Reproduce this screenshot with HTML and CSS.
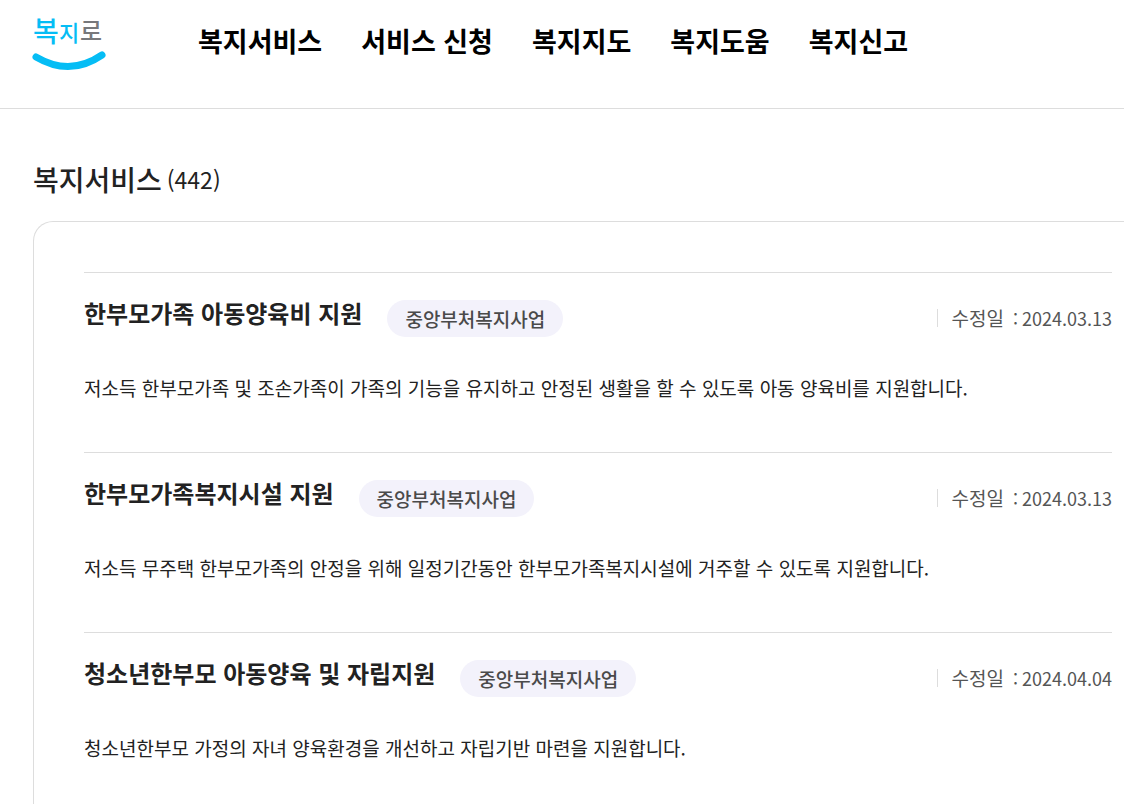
FILE: index.html
```html
<!DOCTYPE html>
<html lang="ko">
<head>
  <meta charset="utf-8">
  <title>복지로</title>
  <link rel="stylesheet" href="styles.css">
</head>
<body>
  <header class="header">
    <a class="logo" href="#" aria-label="복지로">
      <svg width="74" height="64" viewBox="0 0 74 64">
        <text class="logo_text"><tspan x="1" y="34" font-size="28">복</tspan><tspan x="27" y="33" font-size="22">지</tspan><tspan class="logo_gray" x="48" y="32" font-size="24">로</tspan></text>
        <path d="M4 49 Q38 69 70 47" fill="none" stroke="#05bdf5" stroke-width="7" stroke-linecap="round"/>
      </svg>
    </a>
    <nav class="menu">
      <a href="#">복지서비스</a>
      <a href="#">서비스 신청</a>
      <a href="#">복지지도</a>
      <a href="#">복지도움</a>
      <a href="#">복지신고</a>
    </nav>
  </header>
  <main class="content">
    <h1 class="title">복지서비스 <span class="count">(442)</span></h1>
    <div class="panel">
      <article class="item">
        <div class="item_head">
          <h2 class="item_name"><a href="#">한부모가족 아동양육비 지원</a></h2>
          <span class="badge">중앙부처복지사업</span>
          <p class="date"><span class="date_label">수정일</span><span>:</span><time>2024.03.13</time></p>
        </div>
        <p class="desc">저소득 한부모가족 및 조손가족이 가족의 기능을 유지하고 안정된 생활을 할 수 있도록 아동 양육비를 지원합니다.</p>
      </article>
      <article class="item">
        <div class="item_head">
          <h2 class="item_name"><a href="#">한부모가족복지시설 지원</a></h2>
          <span class="badge">중앙부처복지사업</span>
          <p class="date"><span class="date_label">수정일</span><span>:</span><time>2024.03.13</time></p>
        </div>
        <p class="desc">저소득 무주택 한부모가족의 안정을 위해 일정기간동안 한부모가족복지시설에 거주할 수 있도록 지원합니다.</p>
      </article>
      <article class="item">
        <div class="item_head">
          <h2 class="item_name"><a href="#">청소년한부모 아동양육 및 자립지원</a></h2>
          <span class="badge">중앙부처복지사업</span>
          <p class="date"><span class="date_label">수정일</span><span>:</span><time>2024.04.04</time></p>
        </div>
        <p class="desc">청소년한부모 가정의 자녀 양육환경을 개선하고 자립기반 마련을 지원합니다.</p>
      </article>
    </div>
  </main>
</body>
</html>
```

FILE: styles.css
```css
* {
  box-sizing: border-box;
}
body {
  margin: 0;
  min-height: 100vh;
  display: flex;
  flex-direction: column;
  background-color: #fff;
  color: #222;
  font-family: "Noto Sans CJK KR", sans-serif;
}
h1, h2, p {
  margin: 0;
}
a {
  color: inherit;
  text-decoration: none;
}

.header {
  display: flex;
  align-items: flex-start;
  gap: 92px;
  padding: 8px 32px 36px;
  border-bottom: 1px solid #ddd;
}
.logo svg {
  display: block;
}
.logo_text {
  fill: #05bdf5;
  font-weight: 500;
}
.logo_gray {
  fill: #77787b;
}
.menu {
  display: flex;
  gap: 39px;
  padding-top: 13px;
  color: #000;
  font-size: 27px;
  font-weight: 700;
  line-height: 40px;
}

.content {
  flex: 1;
  display: flex;
  flex-direction: column;
  padding: 50px 0 0 33px;
}
.title {
  display: flex;
  gap: 5px;
  font-size: 28px;
  font-weight: 500;
  line-height: 40px;
}
.count {
  font-size: 23px;
  font-weight: 400;
}
.panel {
  flex: 1;
  margin-top: 22px;
  padding: 50px 12px 0 50px;
  border: 1px solid #ddd;
  border-width: 1px 0 0 1px;
  border-top-left-radius: 20px;
}

.item {
  padding: 27px 0 50px;
  border-top: 1px solid #ddd;
}
.item:last-child {
  padding-bottom: 30px;
}
.item_head {
  display: flex;
  align-items: flex-start;
}
.item_name {
  font-size: 24px;
  font-weight: 700;
  line-height: 26px;
}
.badge {
  margin-left: 25px;
  padding: 0 18px;
  border-radius: 20px;
  background-color: #f3f2fb;
  color: #4a4a4a;
  font-size: 19px;
  font-weight: 500;
  line-height: 37px;
}
.date {
  display: flex;
  align-items: center;
  gap: 4px;
  margin-left: auto;
  color: #555;
  font-size: 18px;
  line-height: 36px;
}
.date::before {
  content: "";
  width: 1px;
  height: 18px;
  margin-right: 10px;
  background-color: #ddd;
}
.date_label {
  margin-right: 5px;
  font-size: 19px;
}
.desc {
  margin-top: 37px;
  font-size: 19px;
  line-height: 28px;
}
```
